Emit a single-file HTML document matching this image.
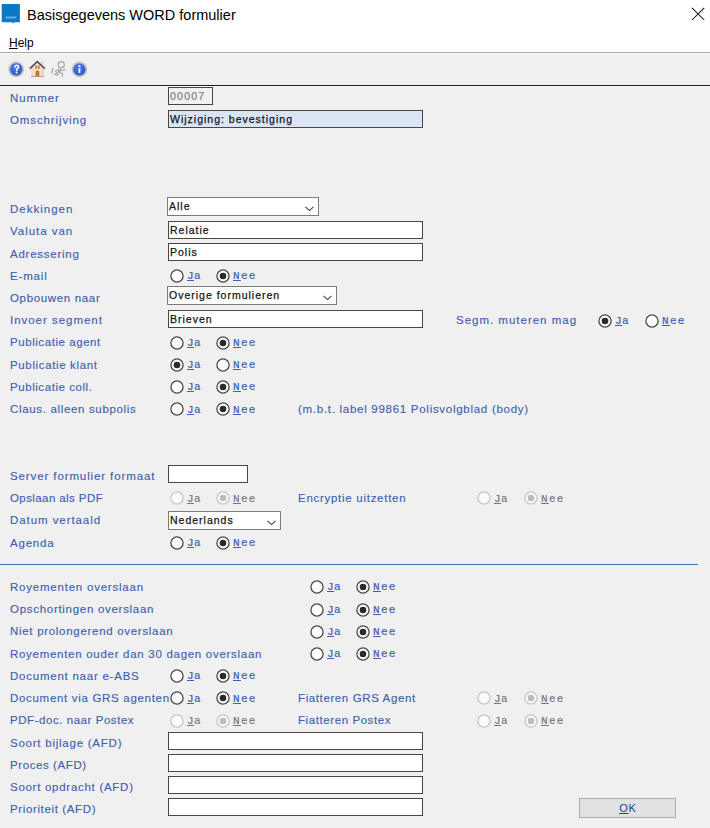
<!DOCTYPE html>
<html><head><meta charset="utf-8"><style>
*{margin:0;padding:0;box-sizing:border-box}
html,body{width:710px;height:828px;overflow:hidden;background:#f0f0f0;font-family:"Liberation Sans",sans-serif;position:relative}
.titlebar{position:absolute;left:0;top:0;width:710px;height:52px;background:#fff}
.title{position:absolute;left:27px;top:5px;font-size:14.5px;color:#000;white-space:nowrap;line-height:20px}
.menu{position:absolute;left:9px;top:36px;font-size:12px;color:#000;line-height:14px}
.sep1{position:absolute;left:0;top:52px;width:710px;height:1px;background:#a9a9a9}
.sep1b{position:absolute;left:0;top:53px;width:710px;height:1px;background:#f7f7f7}
.sep2{position:absolute;left:0;top:85px;width:710px;height:1px;background:#1e1e1e}
.sep2b{position:absolute;left:0;top:86px;width:710px;height:1px;background:#f7f7f7}
.lbl{position:absolute;font-size:11.5px;line-height:14px;color:#3e61ad;letter-spacing:0.65px;white-space:nowrap;-webkit-text-stroke:0.15px #3e61ad}
.rl{position:absolute;font-family:'Liberation Mono',monospace;font-size:11px;line-height:13px;color:#3e61ad;letter-spacing:0.4px;white-space:nowrap;-webkit-text-stroke:0.2px #3e61ad}
.rl.dis{color:#767676;-webkit-text-stroke:0.15px #767676}
.rl u{text-decoration:underline;text-underline-offset:1px}
.rd{position:absolute}
.tb{position:absolute;height:18px;border:1px solid #474747;background:#fff;font-size:10.5px;color:#151515;letter-spacing:1.0px;white-space:nowrap;overflow:hidden;-webkit-text-stroke:0.25px #151515}
.tb span{position:absolute;left:1px;top:2px;line-height:13px}
.tb.blue{background:#d9e4f5}
.tb.num{background:#f0f0f0;border-color:#444;font-weight:normal;font-size:10.5px;color:#7c7c7c;letter-spacing:1.25px;-webkit-text-stroke:0.2px #7c7c7c}
.sel{position:absolute;height:19px;border:1px solid #7a7a7a;background:#fff;font-size:10.5px;color:#151515;letter-spacing:1.0px;white-space:nowrap;-webkit-text-stroke:0.25px #151515}
.sel span{position:absolute;left:1px;top:2px;line-height:13px}
.sel svg{position:absolute;right:4px;top:8px}
.hr{position:absolute;left:0;top:564px;width:698px;height:1px;background:#4a6db0}
.btn{position:absolute;left:579px;top:798px;width:97px;height:20px;border:1px solid #adadad;background:#e1e1e1;font-size:11px;color:#1a3f9a;text-align:center;line-height:19px;letter-spacing:0.8px;padding-left:1px}
</style></head><body>
<div class="titlebar"></div>
<svg style="position:absolute;left:0px;top:0px" width="24" height="26" viewBox="0 0 24 26"><path d="M1.7 4 H19.9 V22.3 H14.2 L13 23.6 L11.8 22.3 H1.7 Z" fill="#0b79c6"/><path d="M5.2 18.4 L5.8 16.6 H16.4 L16 18.4 Z" fill="#b6dcf5" opacity="0.55"/></svg>
<div class="title">Basisgegevens WORD formulier</div>
<svg style="position:absolute;left:691px;top:7px" width="14" height="14" viewBox="0 0 14 14"><path d="M1 0.8 L13.2 13 M13.2 0.8 L1 13" stroke="#111" stroke-width="1.05"/></svg>
<div class="menu"><u>H</u>elp</div>
<div class="sep1"></div><div class="sep1b"></div>
<div class="sep2"></div><div class="sep2b"></div>

<svg style="position:absolute;left:6px;top:59px" width="20" height="20" viewBox="0 0 20 20">
<defs><linearGradient id="rg" x1="0" y1="0" x2="0" y2="1"><stop offset="0" stop-color="#d2d2d2"/><stop offset="1" stop-color="#a8a8a8"/></linearGradient>
<radialGradient id="bg" cx="0.45" cy="0.35" r="0.7"><stop offset="0" stop-color="#5082ee"/><stop offset="1" stop-color="#2250cc"/></radialGradient></defs>
<circle cx="10.2" cy="10" r="7.9" fill="url(#rg)"/><circle cx="10.25" cy="10.1" r="6.05" fill="url(#bg)"/>
<path d="M8.8 8.1 Q8.9 6.3 10.7 6.3 Q12.5 6.3 12.5 7.9 Q12.5 9 11.3 9.7 Q10.6 10.2 10.6 11.4" fill="none" stroke="#fff" stroke-width="1.5" stroke-linecap="round"/><circle cx="10.5" cy="13.5" r="1.0" fill="#fff"/>
</svg>
<svg style="position:absolute;left:27px;top:59px" width="20" height="20" viewBox="0 0 20 20">
<rect x="14.1" y="2.1" width="2.5" height="4" fill="#eedcc8"/>
<defs><linearGradient id="hb" x1="0" y1="0" x2="1" y2="0"><stop offset="0" stop-color="#e9d3bb"/><stop offset="0.5" stop-color="#fbf2e6"/><stop offset="1" stop-color="#e6cfb6"/></linearGradient></defs><path d="M4.2 8.6 L10.3 3 L16.9 8.9 V17.6 H4.2 Z" fill="url(#hb)"/>
<path d="M2.8 9.6 L10.3 2.6 L17.9 9.6" fill="none" stroke="#624e4e" stroke-width="1.7"/>
<rect x="8.2" y="6.3" width="4.6" height="3.7" fill="#c9894c"/><rect x="10.1" y="6.3" width="0.8" height="3.7" fill="#d4eef9"/>
<path d="M8.6 17.6 V12.4 Q10.45 10.3 12.3 12.4 V17.6 Z" fill="#c26a2a"/><rect x="10.2" y="12" width="0.6" height="5.5" fill="#d89058"/>
<rect x="4.2" y="17" width="12.7" height="0.9" fill="#b89088"/>
</svg>
<svg style="position:absolute;left:48px;top:59px" width="20" height="20" viewBox="0 0 20 20" fill="none" stroke="#a2a2a2" stroke-width="1.15" stroke-linecap="round">
<circle cx="13.25" cy="5.65" r="3.05"/>
<path d="M4.9 9.4 L3.8 14.2"/>
<path d="M12.4 8.8 Q11.7 11.5 11.8 14"/>
<path d="M12.4 11.6 L17.3 10.7"/>
<path d="M7.5 12.6 Q8.6 10.5 10.5 10.9 Q11.6 11.3 10.4 12.8 L6.9 15.3 Q8.8 15.9 10.6 15.8"/>
<path d="M11.8 13.8 Q14.6 13.6 14.6 15.6 L14.4 17.2"/>
</svg>
<svg style="position:absolute;left:69px;top:59px" width="20" height="20" viewBox="0 0 20 20">
<circle cx="10.5" cy="10.1" r="7.8" fill="url(#rg)"/><circle cx="10.4" cy="10.2" r="5.95" fill="url(#bg)"/>
<rect x="9.5" y="6.1" width="1.9" height="1.8" rx="0.5" fill="#fff"/><rect x="9.55" y="9.2" width="1.8" height="4.9" fill="#fff"/>
</svg>

<div class="lbl" style="left:10px;top:91px;letter-spacing:0.95px">Nummer</div>
<div class="tb num" style="left:168px;top:87px;width:45px"><span>00007</span></div>
<div class="lbl" style="left:10px;top:113px;letter-spacing:0.89px">Omschrijving</div>
<div class="tb blue" style="left:168px;top:110px;width:255px"><span>Wijziging: bevestiging</span></div>
<div class="lbl" style="left:10px;top:202px;letter-spacing:1.01px">Dekkingen</div>
<div class="sel" style="left:167px;top:197px;width:152px"><span>Alle</span><svg width="9" height="6" viewBox="0 0 9 6"><path d="M0.5 0.8 L4.5 4.6 L8.5 0.8" fill="none" stroke="#404040" stroke-width="1.1"/></svg></div>
<div class="lbl" style="left:10px;top:224px;letter-spacing:0.97px">Valuta van</div>
<div class="tb" style="left:168px;top:221px;width:255px"><span>Relatie</span></div>
<div class="lbl" style="left:10px;top:247px;letter-spacing:0.75px">Adressering</div>
<div class="tb" style="left:168px;top:243px;width:255px"><span>Polis</span></div>
<div class="lbl" style="left:10px;top:269px;letter-spacing:0.83px">E-mail</div>
<svg class="rd" style="left:169.8px;top:269.1px" width="14" height="14" viewBox="0 0 14 14"><circle cx="7" cy="7" r="6.1" fill="#fff" stroke="#4a4a4a" stroke-width="1.3"/></svg>
<div class="rl" style="left:187px;top:270.2px"><u>J</u>a</div>
<svg class="rd" style="left:215.8px;top:269.1px" width="14" height="14" viewBox="0 0 14 14"><circle cx="7" cy="7" r="6.1" fill="#fff" stroke="#4a4a4a" stroke-width="1.3"/><circle cx="7" cy="7" r="3.3" fill="#2a2a2a"/></svg>
<div class="rl" style="left:233px;top:270.2px;letter-spacing:1.3px"><u>N</u>ee</div>
<div class="lbl" style="left:10px;top:291px;letter-spacing:0.66px">Opbouwen naar</div>
<div class="sel" style="left:167px;top:286px;width:170px"><span>Overige formulieren</span><svg width="9" height="6" viewBox="0 0 9 6"><path d="M0.5 0.8 L4.5 4.6 L8.5 0.8" fill="none" stroke="#404040" stroke-width="1.1"/></svg></div>
<div class="lbl" style="left:10px;top:313px;letter-spacing:0.97px">Invoer segment</div>
<div class="tb" style="left:168px;top:310px;width:255px"><span>Brieven</span></div>
<div class="lbl" style="left:456px;top:313px;letter-spacing:0.99px">Segm. muteren mag</div>
<svg class="rd" style="left:597.8px;top:313.5px" width="14" height="14" viewBox="0 0 14 14"><circle cx="7" cy="7" r="6.1" fill="#fff" stroke="#4a4a4a" stroke-width="1.3"/><circle cx="7" cy="7" r="3.3" fill="#2a2a2a"/></svg>
<div class="rl" style="left:615px;top:314.6px"><u>J</u>a</div>
<svg class="rd" style="left:644.8px;top:313.5px" width="14" height="14" viewBox="0 0 14 14"><circle cx="7" cy="7" r="6.1" fill="#fff" stroke="#4a4a4a" stroke-width="1.3"/></svg>
<div class="rl" style="left:662px;top:314.6px;letter-spacing:1.3px"><u>N</u>ee</div>
<div class="lbl" style="left:10px;top:335px;letter-spacing:0.56px">Publicatie agent</div>
<svg class="rd" style="left:169.8px;top:335.8px" width="14" height="14" viewBox="0 0 14 14"><circle cx="7" cy="7" r="6.1" fill="#fff" stroke="#4a4a4a" stroke-width="1.3"/></svg>
<div class="rl" style="left:187px;top:336.8px"><u>J</u>a</div>
<svg class="rd" style="left:215.8px;top:335.8px" width="14" height="14" viewBox="0 0 14 14"><circle cx="7" cy="7" r="6.1" fill="#fff" stroke="#4a4a4a" stroke-width="1.3"/><circle cx="7" cy="7" r="3.3" fill="#2a2a2a"/></svg>
<div class="rl" style="left:233px;top:336.8px;letter-spacing:1.3px"><u>N</u>ee</div>
<div class="lbl" style="left:10px;top:358px;letter-spacing:0.64px">Publicatie klant</div>
<svg class="rd" style="left:169.8px;top:358.0px" width="14" height="14" viewBox="0 0 14 14"><circle cx="7" cy="7" r="6.1" fill="#fff" stroke="#4a4a4a" stroke-width="1.3"/><circle cx="7" cy="7" r="3.3" fill="#2a2a2a"/></svg>
<div class="rl" style="left:187px;top:359.1px"><u>J</u>a</div>
<svg class="rd" style="left:215.8px;top:358.0px" width="14" height="14" viewBox="0 0 14 14"><circle cx="7" cy="7" r="6.1" fill="#fff" stroke="#4a4a4a" stroke-width="1.3"/></svg>
<div class="rl" style="left:233px;top:359.1px;letter-spacing:1.3px"><u>N</u>ee</div>
<div class="lbl" style="left:10px;top:380px;letter-spacing:0.56px">Publicatie coll.</div>
<svg class="rd" style="left:169.8px;top:380.2px" width="14" height="14" viewBox="0 0 14 14"><circle cx="7" cy="7" r="6.1" fill="#fff" stroke="#4a4a4a" stroke-width="1.3"/></svg>
<div class="rl" style="left:187px;top:381.3px"><u>J</u>a</div>
<svg class="rd" style="left:215.8px;top:380.2px" width="14" height="14" viewBox="0 0 14 14"><circle cx="7" cy="7" r="6.1" fill="#fff" stroke="#4a4a4a" stroke-width="1.3"/><circle cx="7" cy="7" r="3.3" fill="#2a2a2a"/></svg>
<div class="rl" style="left:233px;top:381.3px;letter-spacing:1.3px"><u>N</u>ee</div>
<div class="lbl" style="left:10px;top:402px;letter-spacing:0.66px">Claus. alleen subpolis</div>
<svg class="rd" style="left:169.8px;top:402.4px" width="14" height="14" viewBox="0 0 14 14"><circle cx="7" cy="7" r="6.1" fill="#fff" stroke="#4a4a4a" stroke-width="1.3"/></svg>
<div class="rl" style="left:187px;top:403.5px"><u>J</u>a</div>
<svg class="rd" style="left:215.8px;top:402.4px" width="14" height="14" viewBox="0 0 14 14"><circle cx="7" cy="7" r="6.1" fill="#fff" stroke="#4a4a4a" stroke-width="1.3"/><circle cx="7" cy="7" r="3.3" fill="#2a2a2a"/></svg>
<div class="rl" style="left:233px;top:403.5px;letter-spacing:1.3px"><u>N</u>ee</div>
<div class="lbl" style="left:298px;top:402px;letter-spacing:0.72px">(m.b.t. label 99861 Polisvolgblad (body)</div>
<div class="lbl" style="left:10px;top:469px;letter-spacing:0.89px">Server formulier formaat</div>
<div class="tb" style="left:168px;top:465px;width:80px"><span></span></div>
<div class="lbl" style="left:10px;top:491px;letter-spacing:0.41px">Opslaan als PDF</div>
<svg class="rd" style="left:169.8px;top:491.4px" width="14" height="14" viewBox="0 0 14 14"><circle cx="7" cy="7" r="6.1" fill="#fbfbfb" stroke="#c6c6c6" stroke-width="1.3"/></svg>
<div class="rl dis" style="left:187px;top:492.5px"><u>J</u>a</div>
<svg class="rd" style="left:215.8px;top:491.4px" width="14" height="14" viewBox="0 0 14 14"><circle cx="7" cy="7" r="6.1" fill="#fbfbfb" stroke="#c6c6c6" stroke-width="1.3"/><circle cx="7" cy="7" r="3.3" fill="#bcbcbc"/></svg>
<div class="rl dis" style="left:233px;top:492.5px;letter-spacing:1.3px"><u>N</u>ee</div>
<div class="lbl" style="left:298px;top:491px;letter-spacing:0.72px">Encryptie uitzetten</div>
<svg class="rd" style="left:476.8px;top:491.4px" width="14" height="14" viewBox="0 0 14 14"><circle cx="7" cy="7" r="6.1" fill="#fbfbfb" stroke="#c6c6c6" stroke-width="1.3"/></svg>
<div class="rl dis" style="left:494px;top:492.5px"><u>J</u>a</div>
<svg class="rd" style="left:523.8px;top:491.4px" width="14" height="14" viewBox="0 0 14 14"><circle cx="7" cy="7" r="6.1" fill="#fbfbfb" stroke="#c6c6c6" stroke-width="1.3"/><circle cx="7" cy="7" r="3.3" fill="#bcbcbc"/></svg>
<div class="rl dis" style="left:541px;top:492.5px;letter-spacing:1.3px"><u>N</u>ee</div>
<div class="lbl" style="left:10px;top:513px;letter-spacing:0.93px">Datum vertaald</div>
<div class="sel" style="left:168px;top:511px;width:113px"><span>Nederlands</span><svg width="9" height="6" viewBox="0 0 9 6"><path d="M0.5 0.8 L4.5 4.6 L8.5 0.8" fill="none" stroke="#404040" stroke-width="1.1"/></svg></div>
<div class="lbl" style="left:10px;top:536px;letter-spacing:0.79px">Agenda</div>
<svg class="rd" style="left:169.8px;top:535.8px" width="14" height="14" viewBox="0 0 14 14"><circle cx="7" cy="7" r="6.1" fill="#fff" stroke="#4a4a4a" stroke-width="1.3"/></svg>
<div class="rl" style="left:187px;top:536.9px"><u>J</u>a</div>
<svg class="rd" style="left:215.8px;top:535.8px" width="14" height="14" viewBox="0 0 14 14"><circle cx="7" cy="7" r="6.1" fill="#fff" stroke="#4a4a4a" stroke-width="1.3"/><circle cx="7" cy="7" r="3.3" fill="#2a2a2a"/></svg>
<div class="rl" style="left:233px;top:536.9px;letter-spacing:1.3px"><u>N</u>ee</div>
<div class="hr"></div>
<div class="lbl" style="left:10px;top:580px;letter-spacing:0.78px">Royementen overslaan</div>
<svg class="rd" style="left:309.8px;top:580.3px" width="14" height="14" viewBox="0 0 14 14"><circle cx="7" cy="7" r="6.1" fill="#fff" stroke="#4a4a4a" stroke-width="1.3"/></svg>
<div class="rl" style="left:327px;top:581.4px"><u>J</u>a</div>
<svg class="rd" style="left:355.8px;top:580.3px" width="14" height="14" viewBox="0 0 14 14"><circle cx="7" cy="7" r="6.1" fill="#fff" stroke="#4a4a4a" stroke-width="1.3"/><circle cx="7" cy="7" r="3.3" fill="#2a2a2a"/></svg>
<div class="rl" style="left:373px;top:581.4px;letter-spacing:1.3px"><u>N</u>ee</div>
<div class="lbl" style="left:10px;top:602px;letter-spacing:0.71px">Opschortingen overslaan</div>
<svg class="rd" style="left:309.8px;top:602.5px" width="14" height="14" viewBox="0 0 14 14"><circle cx="7" cy="7" r="6.1" fill="#fff" stroke="#4a4a4a" stroke-width="1.3"/></svg>
<div class="rl" style="left:327px;top:603.6px"><u>J</u>a</div>
<svg class="rd" style="left:355.8px;top:602.5px" width="14" height="14" viewBox="0 0 14 14"><circle cx="7" cy="7" r="6.1" fill="#fff" stroke="#4a4a4a" stroke-width="1.3"/><circle cx="7" cy="7" r="3.3" fill="#2a2a2a"/></svg>
<div class="rl" style="left:373px;top:603.6px;letter-spacing:1.3px"><u>N</u>ee</div>
<div class="lbl" style="left:10px;top:624px;letter-spacing:0.70px">Niet prolongerend overslaan</div>
<svg class="rd" style="left:309.8px;top:624.7px" width="14" height="14" viewBox="0 0 14 14"><circle cx="7" cy="7" r="6.1" fill="#fff" stroke="#4a4a4a" stroke-width="1.3"/></svg>
<div class="rl" style="left:327px;top:625.8px"><u>J</u>a</div>
<svg class="rd" style="left:355.8px;top:624.7px" width="14" height="14" viewBox="0 0 14 14"><circle cx="7" cy="7" r="6.1" fill="#fff" stroke="#4a4a4a" stroke-width="1.3"/><circle cx="7" cy="7" r="3.3" fill="#2a2a2a"/></svg>
<div class="rl" style="left:373px;top:625.8px;letter-spacing:1.3px"><u>N</u>ee</div>
<div class="lbl" style="left:10px;top:647px;letter-spacing:0.71px">Royementen ouder dan 30 dagen overslaan</div>
<svg class="rd" style="left:309.8px;top:647.0px" width="14" height="14" viewBox="0 0 14 14"><circle cx="7" cy="7" r="6.1" fill="#fff" stroke="#4a4a4a" stroke-width="1.3"/></svg>
<div class="rl" style="left:327px;top:648.1px"><u>J</u>a</div>
<svg class="rd" style="left:355.8px;top:647.0px" width="14" height="14" viewBox="0 0 14 14"><circle cx="7" cy="7" r="6.1" fill="#fff" stroke="#4a4a4a" stroke-width="1.3"/><circle cx="7" cy="7" r="3.3" fill="#2a2a2a"/></svg>
<div class="rl" style="left:373px;top:648.1px;letter-spacing:1.3px"><u>N</u>ee</div>
<div class="lbl" style="left:10px;top:669px;letter-spacing:0.76px">Document naar e-ABS</div>
<svg class="rd" style="left:169.8px;top:669.2px" width="14" height="14" viewBox="0 0 14 14"><circle cx="7" cy="7" r="6.1" fill="#fff" stroke="#4a4a4a" stroke-width="1.3"/></svg>
<div class="rl" style="left:187px;top:670.3px"><u>J</u>a</div>
<svg class="rd" style="left:215.8px;top:669.2px" width="14" height="14" viewBox="0 0 14 14"><circle cx="7" cy="7" r="6.1" fill="#fff" stroke="#4a4a4a" stroke-width="1.3"/><circle cx="7" cy="7" r="3.3" fill="#2a2a2a"/></svg>
<div class="rl" style="left:233px;top:670.3px;letter-spacing:1.3px"><u>N</u>ee</div>
<div class="lbl" style="left:10px;top:691px;letter-spacing:0.69px">Document via GRS agenten</div>
<svg class="rd" style="left:169.8px;top:691.4px" width="14" height="14" viewBox="0 0 14 14"><circle cx="7" cy="7" r="6.1" fill="#fff" stroke="#4a4a4a" stroke-width="1.3"/></svg>
<div class="rl" style="left:187px;top:692.5px"><u>J</u>a</div>
<svg class="rd" style="left:215.8px;top:691.4px" width="14" height="14" viewBox="0 0 14 14"><circle cx="7" cy="7" r="6.1" fill="#fff" stroke="#4a4a4a" stroke-width="1.3"/><circle cx="7" cy="7" r="3.3" fill="#2a2a2a"/></svg>
<div class="rl" style="left:233px;top:692.5px;letter-spacing:1.3px"><u>N</u>ee</div>
<div class="lbl" style="left:298px;top:691px;letter-spacing:0.61px">Fiatteren GRS Agent</div>
<svg class="rd" style="left:476.8px;top:691.4px" width="14" height="14" viewBox="0 0 14 14"><circle cx="7" cy="7" r="6.1" fill="#fbfbfb" stroke="#c6c6c6" stroke-width="1.3"/></svg>
<div class="rl dis" style="left:494px;top:692.5px"><u>J</u>a</div>
<svg class="rd" style="left:523.8px;top:691.4px" width="14" height="14" viewBox="0 0 14 14"><circle cx="7" cy="7" r="6.1" fill="#fbfbfb" stroke="#c6c6c6" stroke-width="1.3"/><circle cx="7" cy="7" r="3.3" fill="#bcbcbc"/></svg>
<div class="rl dis" style="left:541px;top:692.5px;letter-spacing:1.3px"><u>N</u>ee</div>
<div class="lbl" style="left:10px;top:713px;letter-spacing:0.55px">PDF-doc. naar Postex</div>
<svg class="rd" style="left:169.8px;top:713.7px" width="14" height="14" viewBox="0 0 14 14"><circle cx="7" cy="7" r="6.1" fill="#fbfbfb" stroke="#c6c6c6" stroke-width="1.3"/></svg>
<div class="rl dis" style="left:187px;top:714.8px"><u>J</u>a</div>
<svg class="rd" style="left:215.8px;top:713.7px" width="14" height="14" viewBox="0 0 14 14"><circle cx="7" cy="7" r="6.1" fill="#fbfbfb" stroke="#c6c6c6" stroke-width="1.3"/><circle cx="7" cy="7" r="3.3" fill="#bcbcbc"/></svg>
<div class="rl dis" style="left:233px;top:714.8px;letter-spacing:1.3px"><u>N</u>ee</div>
<div class="lbl" style="left:298px;top:713px;letter-spacing:0.58px">Fiatteren Postex</div>
<svg class="rd" style="left:476.8px;top:713.7px" width="14" height="14" viewBox="0 0 14 14"><circle cx="7" cy="7" r="6.1" fill="#fbfbfb" stroke="#c6c6c6" stroke-width="1.3"/></svg>
<div class="rl dis" style="left:494px;top:714.8px"><u>J</u>a</div>
<svg class="rd" style="left:523.8px;top:713.7px" width="14" height="14" viewBox="0 0 14 14"><circle cx="7" cy="7" r="6.1" fill="#fbfbfb" stroke="#c6c6c6" stroke-width="1.3"/><circle cx="7" cy="7" r="3.3" fill="#bcbcbc"/></svg>
<div class="rl dis" style="left:541px;top:714.8px;letter-spacing:1.3px"><u>N</u>ee</div>
<div class="lbl" style="left:10px;top:736px;letter-spacing:0.76px">Soort bijlage (AFD)</div>
<div class="tb" style="left:168px;top:732px;width:255px"><span></span></div>
<div class="lbl" style="left:10px;top:758px;letter-spacing:0.59px">Proces (AFD)</div>
<div class="tb" style="left:168px;top:754px;width:255px"><span></span></div>
<div class="lbl" style="left:10px;top:780px;letter-spacing:0.72px">Soort opdracht (AFD)</div>
<div class="tb" style="left:168px;top:776px;width:255px"><span></span></div>
<div class="lbl" style="left:10px;top:802px;letter-spacing:0.63px">Prioriteit (AFD)</div>
<div class="tb" style="left:168px;top:798px;width:255px"><span></span></div>
<div class="btn"><u>O</u>K</div>
</body></html>
